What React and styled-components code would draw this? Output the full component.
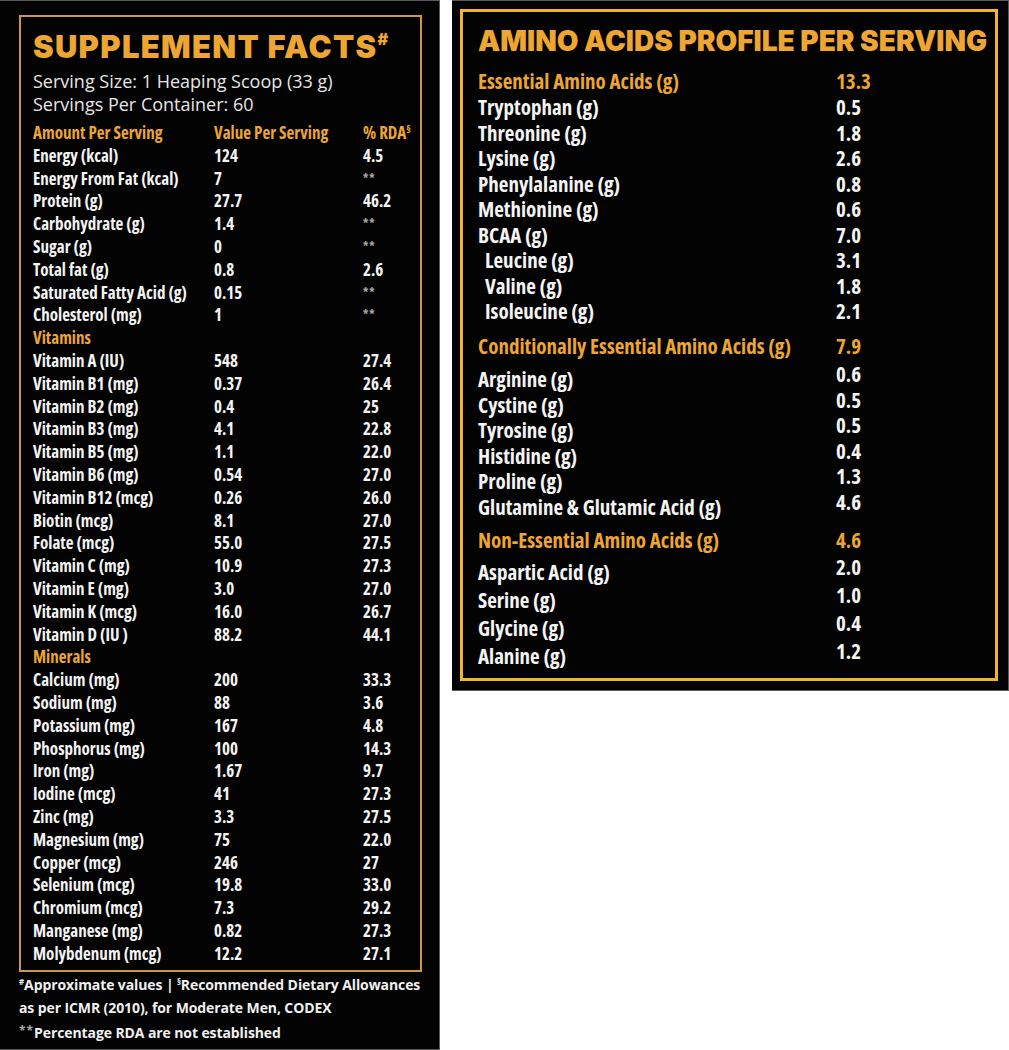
import React from 'react';
import styled, { createGlobalStyle } from 'styled-components';

const GlobalStyle = createGlobalStyle`
  body {
    margin: 0;
    background: #fff;
  }
`;

const GOLD = '#eca631';
const CONDENSED = '"Open Sans", "Roboto Condensed", sans-serif';

const Page = styled.div`
  display: flex;
  align-items: flex-start;
  gap: 12px;
  width: 1009px;
`;

const Panel = styled.section`
  box-sizing: border-box;
  background: #030303;
  width: ${(p) => p.w}px;
  height: ${(p) => p.h}px;
  padding: ${(p) => p.pad};
  border: 1px solid #5a5a5a;
  border-left: none;
`;

const Box = styled.div`
  border: ${(p) => p.bw}px solid ${(p) => p.color};
  padding: ${(p) => p.pad};
`;

const Title = styled.h1`
  margin: 0 0 ${(p) => p.mb}px;
  font-family: Inter, Lato, sans-serif;
  font-weight: 900;
  font-size: ${(p) => p.size}px;
  line-height: 40px;
  letter-spacing: ${(p) => p.ls}px;
  color: ${GOLD};
  white-space: nowrap;

  sup {
    font-size: 16px;
    vertical-align: 13px;
    line-height: 0;
    letter-spacing: 0;
  }
`;

const Serving = styled.p`
  margin: 0;
  font-family: "Open Sans", sans-serif;
  font-stretch: 90%;
  font-size: 18px;
  line-height: 23px;
  color: #e6e6e6;
`;

const FactsTable = styled.div`
  margin-top: 6px;
  font-family: ${CONDENSED};
  font-stretch: 82%;
  font-weight: 700;
  font-size: 17px;
`;

const FactRow = styled.div`
  display: grid;
  grid-template-columns: 181px 149px 1fr;
  height: 22.8px;
  line-height: 22.8px;
  color: ${(p) => (p.gold ? GOLD : '#f4f4f4')};
  white-space: nowrap;

  sup {
    font-size: 11px;
    vertical-align: 6px;
    line-height: 0;
  }
`;

const NotSet = styled.span`
  font-size: 12px;
  color: #a8a8a8;
  letter-spacing: 1px;
  vertical-align: 3px;
`;

const Notes = styled.div`
  padding-top: 1px;
  font-family: "Open Sans", sans-serif;
  font-weight: 700;
  font-size: 14px;
  letter-spacing: -0.1px;
  line-height: 23px;
  color: #f0f0f0;
  white-space: nowrap;

  sup {
    font-size: 8px;
    vertical-align: 5px;
    line-height: 0;
  }
`;

const Group = styled.div`
  margin-top: ${(p) => p.mt}px;
  font-family: ${CONDENSED};
  font-stretch: 80%;
  font-weight: 700;
  font-size: 21px;
`;

const AminoRow = styled.div`
  display: grid;
  grid-template-columns: 358px 1fr;
  height: ${(p) => p.h}px;
  line-height: ${(p) => p.h}px;
  margin-bottom: ${(p) => p.mb || 0}px;
  padding-left: ${(p) => (p.indent ? 7 : 0)}px;
  color: ${(p) => (p.gold ? GOLD : '#f4f4f4')};
  white-space: nowrap;
`;

const AminoValue = styled.span`
  margin-left: ${(p) => (p.indent ? -7 : 0)}px;
  transform: translateY(${(p) => p.lift}px);
`;

const facts = [
  { head: true, cells: ['Amount Per Serving', 'Value Per Serving', 'RDA'] },
  ['Energy (kcal)', '124', '4.5'],
  ['Energy From Fat (kcal)', '7', '**'],
  ['Protein (g)', '27.7', '46.2'],
  ['Carbohydrate (g)', '1.4', '**'],
  ['Sugar (g)', '0', '**'],
  ['Total fat (g)', '0.8', '2.6'],
  ['Saturated Fatty Acid (g)', '0.15', '**'],
  ['Cholesterol (mg)', '1', '**'],
  'Vitamins',
  ['Vitamin A (IU)', '548', '27.4'],
  ['Vitamin B1 (mg)', '0.37', '26.4'],
  ['Vitamin B2 (mg)', '0.4', '25'],
  ['Vitamin B3 (mg)', '4.1', '22.8'],
  ['Vitamin B5 (mg)', '1.1', '22.0'],
  ['Vitamin B6 (mg)', '0.54', '27.0'],
  ['Vitamin B12 (mcg)', '0.26', '26.0'],
  ['Biotin (mcg)', '8.1', '27.0'],
  ['Folate (mcg)', '55.0', '27.5'],
  ['Vitamin C (mg)', '10.9', '27.3'],
  ['Vitamin E (mg)', '3.0', '27.0'],
  ['Vitamin K (mcg)', '16.0', '26.7'],
  ['Vitamin D (IU )', '88.2', '44.1'],
  'Minerals',
  ['Calcium (mg)', '200', '33.3'],
  ['Sodium (mg)', '88', '3.6'],
  ['Potassium (mg)', '167', '4.8'],
  ['Phosphorus (mg)', '100', '14.3'],
  ['Iron (mg)', '1.67', '9.7'],
  ['Iodine (mcg)', '41', '27.3'],
  ['Zinc (mg)', '3.3', '27.5'],
  ['Magnesium (mg)', '75', '22.0'],
  ['Copper (mcg)', '246', '27'],
  ['Selenium (mcg)', '19.8', '33.0'],
  ['Chromium (mcg)', '7.3', '29.2'],
  ['Manganese (mg)', '0.82', '27.3'],
  ['Molybdenum (mcg)', '12.2', '27.1'],
];

const aminoGroups = [
  {
    mt: 0,
    pitch: 25.5,
    gap: 0.5,
    lift: 0,
    head: ['Essential Amino Acids (g)', '13.3'],
    items: [
      ['Tryptophan (g)', '0.5'],
      ['Threonine (g)', '1.8'],
      ['Lysine (g)', '2.6'],
      ['Phenylalanine (g)', '0.8'],
      ['Methionine (g)', '0.6'],
      ['BCAA (g)', '7.0'],
      ['Leucine (g)', '3.1', true],
      ['Valine (g)', '1.8', true],
      ['Isoleucine (g)', '2.1', true],
    ],
  },
  {
    mt: 9.5,
    pitch: 25.5,
    gap: 7.5,
    lift: -5,
    head: ['Conditionally Essential Amino Acids (g)', '7.9'],
    items: [
      ['Arginine (g)', '0.6'],
      ['Cystine (g)', '0.5'],
      ['Tyrosine (g)', '0.5'],
      ['Histidine (g)', '0.4'],
      ['Proline (g)', '1.3'],
      ['Glutamine & Glutamic Acid (g)', '4.6'],
    ],
  },
  {
    mt: 7.5,
    pitch: 28,
    gap: 5,
    lift: -5,
    head: ['Non-Essential Amino Acids (g)', '4.6'],
    items: [
      ['Aspartic Acid (g)', '2.0'],
      ['Serine (g)', '1.0'],
      ['Glycine (g)', '0.4'],
      ['Alanine (g)', '1.2'],
    ],
  },
];

function FactLine({ row }) {
  if (typeof row === 'string') {
    return (
      <FactRow gold>
        <span>{row}</span>
      </FactRow>
    );
  }
  if (row.head) {
    return (
      <FactRow gold>
        <span>{row.cells[0]}</span>
        <span>{row.cells[1]}</span>
        <span>
          % RDA<sup>§</sup>
        </span>
      </FactRow>
    );
  }
  return (
    <FactRow>
      <span>{row[0]}</span>
      <span>{row[1]}</span>
      <span>{row[2] === '**' ? <NotSet>**</NotSet> : row[2]}</span>
    </FactRow>
  );
}

function SupplementFacts() {
  return (
    <Panel w={440} h={1050} pad="14px 17px 0 19px">
      <Box bw={2} color="#cf9548" pad="10px 10px 5px 12px">
        <Title size={31} ls={1.3} mb={3}>
          SUPPLEMENT FACTS<sup>#</sup>
        </Title>
        <Serving>Serving Size: 1 Heaping Scoop (33 g)</Serving>
        <Serving>Servings Per Container: 60</Serving>
        <FactsTable>
          {facts.map((row, i) => (
            <FactLine key={i} row={row} />
          ))}
        </FactsTable>
      </Box>
      <Notes>
        <div>
          <sup>#</sup>Approximate values | <sup>§</sup>Recommended Dietary Allowances
        </div>
        <div>as per ICMR (2010), for Moderate Men, CODEX</div>
        <div>
          <NotSet>**</NotSet>Percentage RDA are not established
        </div>
      </Notes>
    </Panel>
  );
}

function AminoProfile() {
  return (
    <Panel w={557} h={691} pad="8px 10px 10px 8px">
      <Box bw={3} color="#f2b32e" pad="9px 10px 8px 15px">
        <Title size={28} ls={0} mb={8}>
          AMINO ACIDS PROFILE PER SERVING
        </Title>
        {aminoGroups.map((g) => (
          <Group key={g.head[0]} mt={g.mt}>
            <AminoRow gold h={25.5} mb={g.gap}>
              <span>{g.head[0]}</span>
              <span>{g.head[1]}</span>
            </AminoRow>
            {g.items.map(([name, value, indent]) => (
              <AminoRow key={name} h={g.pitch} indent={indent}>
                <span>{name}</span>
                <AminoValue indent={indent} lift={g.lift}>
                  {value}
                </AminoValue>
              </AminoRow>
            ))}
          </Group>
        ))}
      </Box>
    </Panel>
  );
}

export default function App() {
  return (
    <>
      <GlobalStyle />
      <Page>
        <SupplementFacts />
        <AminoProfile />
      </Page>
    </>
  );
}
